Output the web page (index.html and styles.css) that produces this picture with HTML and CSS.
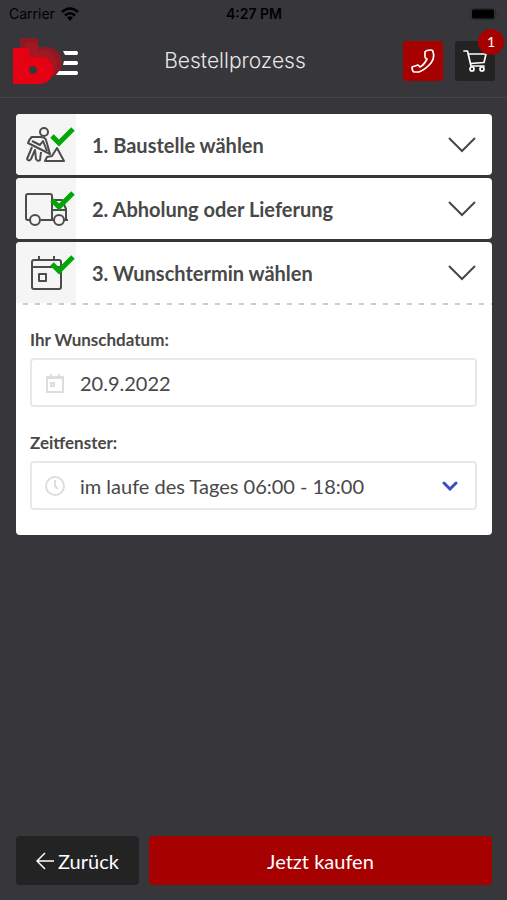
FILE: index.html
```html
<!DOCTYPE html>
<html lang="de">
<head>
<meta charset="utf-8">
<meta name="viewport" content="width=device-width, initial-scale=1">
<title>Bestellprozess</title>
<link rel="stylesheet" href="styles.css">
</head>
<body>
<div class="status">
  <span class="carrier">Carrier
    <svg width="18" height="14" viewBox="0 0 18 14" aria-hidden="true"><g fill="none" stroke="#000" stroke-width="2.6"><path d="M1 5Q9 -2 17 5"/><path d="M4 8.500Q9 4 14 8.500"/></g><path d="M6 10.500Q9 8 12 10.500L9 14Z"/></svg>
  </span>
  <span class="time">4:27 PM</span>
  <svg class="battery" width="29" height="12" viewBox="0 0 29 12" aria-hidden="true"><rect x=".5" y=".5" width="25" height="11" rx="3" fill="none" stroke="#2a292d"/><rect x="2" y="1.500" width="22" height="9" rx="1.500"/><path d="M27 4q2 2 0 4z" fill="#2a292d"/></svg>
</div>
<header class="header">
  <a href="#" class="logo" aria-label="Startseite">
    <svg width="66" height="48" viewBox="0 0 66 48">
      <path fill="#8c1a25" d="M7 1H25V10H34C43 10 49 17 49 26C49 34 44 40 36 40H7Z"/>
      <path fill="#a31722" d="M12 6H25V14H31C39 14 44 20 44 28C44 36 39 41 31 41H12Z"/>
      <path fill="#e60014" d="M0 11H16V20H26C35 20 40 25 40 33C40 41 35 47 26 47H0Z"/>
      <circle cx="20" cy="33" r="4" fill="#37363b"/>
      <path fill="#fff" d="M50 14H64Q66 16 64 18H52ZM51 24H64Q66 26 64 28H50ZM46 34H64Q66 36 64 38H43Z"/>
    </svg>
  </a>
  <h1 class="title">Bestellprozess</h1>
  <nav class="actions">
    <a href="#" class="action call" aria-label="Anrufen">
      <svg width="24" height="24" viewBox="0 0 24 24"><path d="M14 3Q15 1 20 1Q22 1 22 3Q24 9 20 14Q15 20 8 23L3 23Q1 22 1 18L7 16Q8 17 9 18Q13 16 16 10Q14 9 14 8Z"/></svg>
    </a>
    <a href="#" class="action cart" aria-label="Warenkorb">
      <svg width="24" height="24" viewBox="0 0 24 24"><path d="M1 2H4.500L8 17H21M5.500 5H23L21 13.500L7.500 14.500"/><circle cx="9" cy="20" r="2"/><circle cx="19" cy="20" r="2"/></svg>
      <span class="badge">1</span>
    </a>
  </nav>
</header>
<main class="steps">
  <section class="card">
    <button type="button" class="step">
      <span class="tile"><svg width="60" height="61" viewBox="0 0 60 61"><g class="line"><circle cx="28" cy="18" r="4"/><path d="M24 23L16 23Q14 24 12 29L34 40L30 26Q29 23 24 23M16 27L24 31L27 27L31 37M16 33L11 45Q13 48 15 45L19 36L20 45Q22 48 24 46L25 38M41 34L48 47H29L31 43L36 42Z"/></g><path class="check" d="M36 22L43 29L57 15"/></svg></span>
      <span class="name">1. Baustelle wählen</span>
      <svg class="chevron" width="28" height="16" viewBox="0 0 28 16"><path d="M1 1L14 14L27 1"/></svg>
    </button>
  </section>
  <section class="card">
    <button type="button" class="step">
      <span class="tile"><svg width="60" height="61" viewBox="0 0 60 61"><g class="line"><path d="M14 42H12Q10 42 10 40V18Q10 16 12 16H34Q36 16 36 18V42H25M36 22H46L50 31V42M36 32H50M48 42H52M36 42H38"/><circle cx="19" cy="42" r="5"/><circle cx="43" cy="42" r="5"/></g><path class="check" d="M36 22L43 29L57 15"/></svg></span>
      <span class="name">2. Abholung oder Lieferung</span>
      <svg class="chevron" width="28" height="16" viewBox="0 0 28 16"><path d="M1 1L14 14L27 1"/></svg>
    </button>
  </section>
  <section class="card">
    <button type="button" class="step" aria-expanded="true">
      <span class="tile"><svg width="60" height="61" viewBox="0 0 60 61"><g class="line"><rect x="16" y="18" width="29" height="29" rx="2"/><path d="M16 25H45M23 14V18M38 14V18"/><rect x="23" y="32" width="7" height="7"/></g><path class="check" d="M36 22L43 29L57 15"/></svg></span>
      <span class="name">3. Wunschtermin wählen</span>
      <svg class="chevron" width="28" height="16" viewBox="0 0 28 16"><path d="M1 1L14 14L27 1"/></svg>
    </button>
    <form class="form">
      <label class="label" for="date">Ihr Wunschdatum:</label>
      <div class="field">
        <svg width="20" height="20" viewBox="0 0 20 20"><path d="M2 4H18V19H2ZM2 5H18M6 1V4M14 1V4"/><rect x="6" y="10" width="3" height="3"/></svg>
        <input id="date" type="text" value="20.9.2022">
      </div>
      <label class="label" for="slot">Zeitfenster:</label>
      <div class="field">
        <svg width="20" height="20" viewBox="0 0 20 20"><circle cx="10" cy="10" r="9"/><path d="M10 4V10L13 13"/></svg>
        <select id="slot"><option>im laufe des Tages 06:00 - 18:00</option></select>
        <svg class="arrow" width="16" height="10" viewBox="0 0 16 10"><path d="M2 2L8 8L14 2"/></svg>
      </div>
    </form>
  </section>
</main>
<footer class="footer">
  <button type="button" class="button back"><svg width="18" height="18" viewBox="0 0 18 18"><path d="M9 1L1 9L9 17M1 9H18"/></svg>Zurück</button>
  <button type="button" class="button buy">Jetzt kaufen</button>
</footer>
</body>
</html>
```
FILE: styles.css
```css
* { box-sizing: border-box; }
body {
  margin: 0;
  min-height: 100vh;
  display: flex;
  flex-direction: column;
  background: #37363b;
  color: #484848;
  font-family: Lato, sans-serif;
}
svg { display: block; flex: none; }
button, input, select { font: inherit; color: inherit; }
.status {
  display: grid;
  grid-template-columns: 1fr auto 1fr;
  align-items: center;
  height: 27px;
  padding: 0 8px 0 9px;
  color: #000;
  font: 14px Inter, sans-serif;
}
.carrier { display: flex; align-items: center; gap: 6px; }
.time { font-weight: 600; }
.battery { justify-self: end; }
.header {
  display: flex;
  align-items: center;
  height: 71px;
  padding: 0 12px 3px 13px;
  border-bottom: 1px solid #454449;
}
.title {
  flex: 1;
  margin: 0;
  padding-right: 12px;
  color: #e8e8e8;
  font: 300 21px Inter, sans-serif;
  text-align: center;
}
.actions { display: flex; gap: 12px; }
.action {
  position: relative;
  display: grid;
  place-items: center;
  width: 40px;
  height: 40px;
  border-radius: 3px;
}
.action svg { fill: none; stroke: #fff; stroke-width: 1.7; stroke-linejoin: round; stroke-linecap: round; }
.call { background: #a60000; }
.cart { background: #232323; }
.badge {
  position: absolute;
  top: -12px;
  right: -9px;
  width: 26px;
  height: 26px;
  border-radius: 50%;
  background: #a60000;
  color: #fff;
  font: 14px/26px Lato, sans-serif;
  text-align: center;
}
.steps {
  flex: 1;
  display: flex;
  flex-direction: column;
  gap: 3px;
  padding: 16px 15px 16px 16px;
}
.card { overflow: hidden; border-radius: 4px; background: #fff; }
.step {
  display: flex;
  align-items: center;
  width: 100%;
  padding: 0 16px 0 0;
  border: 0;
  background: none;
  text-align: left;
  font-size: 20px;
  font-weight: 700;
}
.tile { margin-right: 16px; background: #f5f5f5; }
.name { flex: 1; }
.line { fill: none; stroke: #4c4c4c; stroke-width: 2; stroke-linejoin: round; }
.check { fill: none; stroke: #00a806; stroke-width: 5; }
.chevron { fill: none; stroke: #484848; stroke-width: 2; }
.form {
  margin-left: 7px;
  padding: 27px 15px 25px 7px;
  background: repeating-linear-gradient(90deg, #ccc 0 5px, transparent 5px 12px) top / 100% 2px no-repeat;
}
.label { display: block; font-size: 17px; line-height: 20px; font-weight: 700; }
.field {
  display: flex;
  align-items: center;
  gap: 15px;
  height: 49px;
  margin-top: 8px;
  padding: 0 17px 0 13px;
  border: 2px solid #e8e8e8;
  border-radius: 4px;
}
.field + .label { margin-top: 26px; }
.field svg { fill: none; stroke: #ddd; stroke-width: 2; }
.field .arrow { stroke: #3c50bd; stroke-width: 3; stroke-linecap: round; }
.field input, .field select {
  flex: 1;
  min-width: 0;
  padding: 0;
  border: 0;
  outline: 0;
  background: none;
  appearance: none;
  font-size: 20px;
}
.footer { display: flex; gap: 10px; padding: 0 15px 15px 16px; }
.button {
  display: flex;
  align-items: center;
  justify-content: center;
  gap: 4px;
  height: 49px;
  padding: 0 20px;
  border: 0;
  border-radius: 4px;
  color: #fff;
  font-size: 20px;
}
.back { background: #232323; }
.back svg { fill: none; stroke: #fff; stroke-width: 1.500; }
.buy { flex: 1; background: #a60000; }
```
